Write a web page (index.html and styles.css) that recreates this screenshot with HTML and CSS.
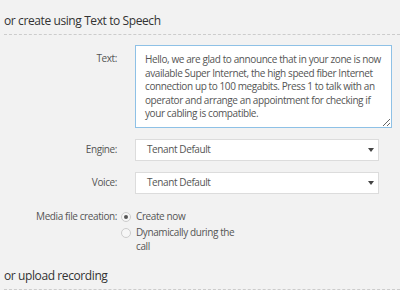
FILE: index.html
```html
<!DOCTYPE html>
<html lang="en">
<head>
    <meta charset="UTF-8">
    <title>Text to Speech</title>
    <link rel="stylesheet" href="styles.css">
</head>
<body>
    <div class="section">
        <h3 class="section-title">or create using Text to Speech</h3>
        <div class="form-row row-text">
            <label class="form-label">Text:</label>
            <textarea class="form-textarea">Hello, we are glad to announce that in your zone is now available Super Internet, the high speed fiber Internet connection up to 100 megabits. Press 1 to talk with an operator and arrange an appointment for checking if your cabling is compatible.</textarea>
        </div>
        <div class="form-row">
            <label class="form-label">Engine:</label>
            <div class="form-select">
                <span>Tenant Default</span>
                <span class="caret"></span>
            </div>
        </div>
        <div class="form-row">
            <label class="form-label">Voice:</label>
            <div class="form-select">
                <span>Tenant Default</span>
                <span class="caret"></span>
            </div>
        </div>
        <div class="form-row radios-row">
            <label class="form-label">Media file creation:</label>
            <div class="radio-list">
                <div class="radio-item">
                    <span class="radio checked"></span>
                    <span>Create now</span>
                </div>
                <div class="radio-item">
                    <span class="radio"></span>
                    <span>Dynamically during the<br>call</span>
                </div>
            </div>
        </div>
    </div>
    <div class="section section-upload">
        <h3 class="section-title">or upload recording</h3>
    </div>
</body>
</html>
```
FILE: styles.css
```css
body {
    margin: 0;
    padding: 0 0 0 4px;
    background-color: #f2f2f2;
    font-family: 'Open Sans', sans-serif;
    font-size: 10px;
    letter-spacing: -0.4px;
    line-height: 13.5px;
    color: #555;
}
.section-title {
    margin: 0;
    padding: 14px 0 6px;
    font-size: 12px;
    line-height: 14px;
    font-weight: normal;
    color: #333;
    border-bottom: 1px dashed #ccc;
}
.form-row {
    display: flex;
    align-items: center;
    margin-top: 11px;
}
.row-text {
    align-items: flex-start;
    margin-top: 10px;
}
.row-text .form-label {
    padding-top: 7px;
}
.form-label {
    width: 113px;
    margin-right: 18px;
    text-align: right;
}
.form-textarea {
    box-sizing: border-box;
    width: 257px;
    height: 83px;
    margin: 0;
    padding: 7px 9px 6px;
    border: 1px solid #8ec1e6;
    background-color: #fff;
    font-family: 'Open Sans', sans-serif;
    font-size: 10px;
    letter-spacing: -0.4px;
    line-height: 13.5px;
    color: #555;
    resize: vertical;
    outline: none;
    overflow: hidden;
}
.form-select {
    box-sizing: border-box;
    display: flex;
    justify-content: space-between;
    align-items: center;
    width: 244px;
    height: 22px;
    padding: 0 4px 0 11px;
    border: 1px solid #dcdcdc;
    background-color: #fff;
}
.caret {
    width: 0;
    height: 0;
    border-left: 3px solid transparent;
    border-right: 3px solid transparent;
    border-top: 4px solid #444;
}
.radios-row {
    align-items: flex-start;
    margin-top: 16px;
}
.radios-row .form-label {
    margin-right: 4px;
}
.radio-list {
    display: flex;
    flex-direction: column;
    gap: 2.5px;
}
.radio-item {
    display: flex;
    align-items: flex-start;
}
.radio {
    box-sizing: border-box;
    position: relative;
    width: 10px;
    height: 10px;
    margin: 2px 5px 0 0;
    border: 1px solid #ccc;
    border-radius: 50%;
    background-color: #f6f6f6;
}
.radio.checked::after {
    content: '';
    position: absolute;
    top: 2px;
    left: 2px;
    width: 4px;
    height: 4px;
    border-radius: 50%;
    background-color: #555;
}
.section-upload .section-title {
    padding-top: 16px;
}
```
